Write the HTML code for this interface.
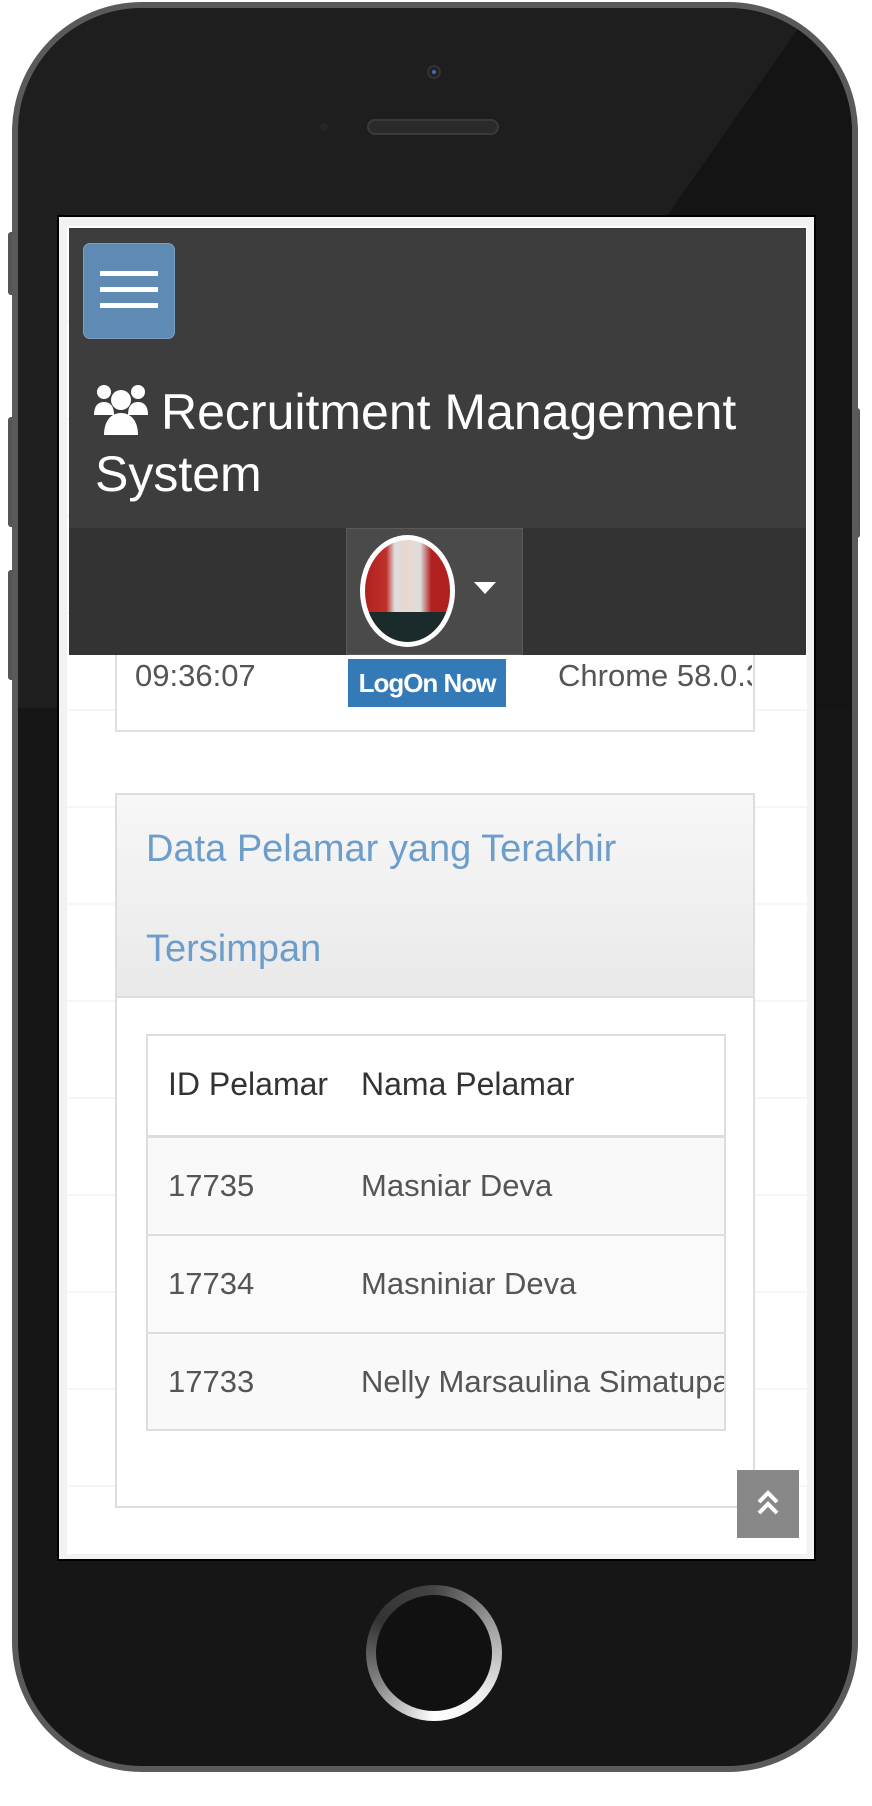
<!DOCTYPE html>
<html><head><meta charset="utf-8"><style>
*{margin:0;padding:0;box-sizing:border-box}
body{width:872px;height:1806px;background:#fff;position:relative;overflow:hidden;font-family:"Liberation Sans",sans-serif}
.a{position:absolute}
</style></head><body>
<div class="a" style="left:8px;top:232px;width:10px;height:63px;background:#555;border-radius:3px"></div>
<div class="a" style="left:8px;top:417px;width:10px;height:110px;background:#555;border-radius:3px"></div>
<div class="a" style="left:8px;top:570px;width:10px;height:110px;background:#555;border-radius:3px"></div>
<div class="a" style="left:850px;top:408px;width:10px;height:130px;background:#555;border-radius:3px"></div>
<div class="a" style="left:12px;top:2px;width:846px;height:1770px;border-radius:130px;background:#5a5a5a"></div>
<div class="a" style="left:18px;top:8px;width:834px;height:1758px;border-radius:124px;background:#161616"></div>
<div class="a" style="left:18px;top:8px;width:834px;height:700px;border-radius:124px 124px 0 0;background:linear-gradient(125deg,#1e1e1e 0%,#1e1e1e 60%,#141414 60%)"></div>
<div class="a" style="left:427px;top:65px;width:14px;height:14px;border-radius:50%;background:#222;border:2px solid #333"><div style="margin:3px;width:4px;height:4px;border-radius:50%;background:#3a6fb0"></div></div>
<div class="a" style="left:367px;top:119px;width:132px;height:16px;border-radius:8px;background:#2a2a2a;border:2px solid #3a3a3a"></div>
<div class="a" style="left:320px;top:123px;width:8px;height:8px;border-radius:50%;background:#262626"></div>
<div class="a" style="left:57px;top:215px;width:759px;height:1346px;background:#f2f2f2;border:2px solid #000"></div>
<div class="a" style="left:67px;top:226px;width:740px;height:1328px;background:#fff;background-image:repeating-linear-gradient(#fff 0,#fff 95px,#f3f7fb 95px,#f3f7fb 97px)"></div>
<div class="a" style="left:69px;top:228px;width:737px;height:300px;background:#3d3d3d"></div>
<div class="a" style="left:83px;top:243px;width:92px;height:96px;background:#5f8ab3;border-radius:7px;border:1px solid #7aa0c5"></div>
<div class="a" style="left:100px;top:271px;width:58px;height:5px;background:#fff"></div>
<div class="a" style="left:100px;top:287px;width:58px;height:5px;background:#fff"></div>
<div class="a" style="left:100px;top:303px;width:58px;height:5px;background:#fff"></div>
<svg class="a" style="left:94px;top:383px" width="54" height="56" viewBox="0 0 54 56"><g fill="#fff"><circle cx="10" cy="9" r="7"/><circle cx="44" cy="9" r="7"/><path d="M0 32c0-9 4-13 10-13s10 4 10 13z"/><path d="M34 32c0-9 4-13 10-13s10 4 10 13z"/><circle cx="27" cy="17" r="10"/><path d="M10 52c0-14 7-22 17-22s17 8 17 22z"/></g></svg>
<div class="a" style="left:161px;top:382px;color:#fff;font-size:50px;line-height:60px;white-space:nowrap">Recruitment Management</div>
<div class="a" style="left:95px;top:444px;color:#fff;font-size:50px;line-height:60px">System</div>
<div class="a" style="left:69px;top:528px;width:737px;height:127px;background:#333"></div>
<div class="a" style="left:346px;top:528px;width:177px;height:127px;background:#4a4a4a;border:1px solid #5a5a5a"></div>
<div class="a" style="left:360px;top:535px;width:95px;height:112px;border-radius:50%;background:#fff"></div>
<div class="a" style="left:365px;top:540px;width:85px;height:102px;border-radius:50%;background:linear-gradient(90deg,#b0201f 0%,#c0302a 25%,#ddd 35%,#e8d8cc 50%,#ddd 65%,#b0201f 78%);overflow:hidden"><div style="position:absolute;left:0;top:72px;width:85px;height:30px;background:#1b2a2a"></div></div>
<div class="a" style="left:474px;top:582px;width:0;height:0;border-left:11px solid transparent;border-right:11px solid transparent;border-top:12px solid #fff"></div>
<div class="a" style="left:115px;top:655px;width:640px;height:77px;background:#fff;border:2px solid #e0e0e0;border-top:none"></div>
<div class="a" style="left:135px;top:656px;font-size:31px;color:#555;line-height:40px">09:36:07</div>
<div class="a" style="left:348px;top:659px;width:158px;height:48px;background:#337ab7;color:#fff;font-size:26px;font-weight:bold;line-height:48px;text-align:center;letter-spacing:-1px">LogOn Now</div>
<div class="a" style="left:558px;top:656px;font-size:31px;color:#555;line-height:40px;width:194px;overflow:hidden;white-space:nowrap">Chrome 58.0.3029</div>
<div class="a" style="left:115px;top:793px;width:640px;height:715px;background:#fff;border:2px solid #ddd"></div>
<div class="a" style="left:117px;top:795px;width:636px;height:203px;background:linear-gradient(#f7f7f7,#e9e9e9);border-bottom:2px solid #ddd"></div>
<div class="a" style="left:146px;top:824px;font-size:38px;color:#6c9dcb;line-height:50px">Data Pelamar yang Terakhir</div>
<div class="a" style="left:146px;top:924px;font-size:38px;color:#6c9dcb;line-height:50px">Tersimpan</div>
<div class="a" style="left:146px;top:1034px;width:580px;height:397px;border:2px solid #ddd;background:#f9f9f9;overflow:hidden">
<div style="height:102px;background:#fff;border-bottom:3px solid #ddd;position:relative">
<span class="a" style="left:20px;top:30px;font-size:32px;color:#333">ID Pelamar</span>
<span class="a" style="left:213px;top:30px;font-size:32px;color:#333">Nama Pelamar</span></div>
<div style="height:98px;border-bottom:2px solid #ddd;position:relative"><span class="a" style="left:20px;top:30px;font-size:31px;color:#555">17735</span><span class="a" style="left:213px;top:30px;font-size:31px;color:#555">Masniar Deva</span></div>
<div style="height:98px;border-bottom:2px solid #ddd;position:relative;background:#fafafa"><span class="a" style="left:20px;top:30px;font-size:31px;color:#555">17734</span><span class="a" style="left:213px;top:30px;font-size:31px;color:#555">Masniniar Deva</span></div>
<div style="height:98px;position:relative"><span class="a" style="left:20px;top:30px;font-size:31px;color:#555;white-space:nowrap">17733</span><span class="a" style="left:213px;top:30px;font-size:31px;color:#555;white-space:nowrap">Nelly Marsaulina Simatupang</span></div>
</div>
<div class="a" style="left:737px;top:1470px;width:62px;height:68px;background:#888"></div>
<svg class="a" style="left:756px;top:1488px" width="24" height="30" viewBox="0 0 24 30"><path d="M3 14l9-9 9 9M3 25l9-9 9 9" stroke="#fff" stroke-width="4" fill="none"/></svg>
<div class="a" style="left:366px;top:1585px;width:136px;height:136px;border-radius:50%;background:conic-gradient(#444 0deg,#999 60deg,#eee 130deg,#fff 180deg,#888 240deg,#333 300deg,#444 360deg)"></div>
<div class="a" style="left:376px;top:1595px;width:116px;height:116px;border-radius:50%;background:#111"></div>
</body></html>
